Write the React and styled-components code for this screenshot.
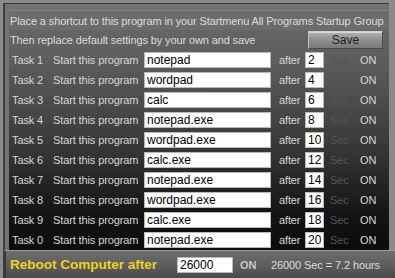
import React from 'react'
import styled, { createGlobalStyle } from 'styled-components'

const GlobalStyle = createGlobalStyle`
  html, body {
    margin: 0;
    padding: 0;
    background: #8a8a8a;
  }
  * {
    box-sizing: border-box;
  }
`

const Frame = styled.div`
  width: 395px;
  height: 278px;
  background: #8a8a8a;
  padding: 3px 6px 0 3px;
  font-family: "Liberation Sans", Arial, sans-serif;
  display: flex;
  flex-direction: column;
  overflow: hidden;
`

const Panel = styled.div`
  flex: 1;
  display: flex;
  flex-direction: column;
  border-top: 1px solid #3c3c3c;
  border-left: 2px solid #3c3c3c;
  background: #727272;
  padding-top: 6px;
`

const Body = styled.div`
  display: flex;
  flex-direction: column;
  margin-left: 4px;
  background: linear-gradient(#6a6a6a 0%, #5e5e5e 20%, #3a3a3a 55%, #141414 85%, #0c0c0c 100%);
`

const InfoRow = styled.div`
  height: 20px;
  display: flex;
  align-items: center;
  justify-content: space-between;
  padding: 0 6px 0 1px;
  font-size: 11px;
  letter-spacing: -0.12px;
  white-space: nowrap;
  color: #dcdcdc;
  background: ${p => (p.$first ? '#6c6c6c' : 'transparent')};
  border-top: ${p => (p.$first ? '1px solid #858585' : 'none')};
`

const SaveButton = styled.button`
  width: 75px;
  height: 18px;
  padding: 0;
  font-family: inherit;
  font-size: 12px;
  color: #1e1e1e;
  background: linear-gradient(#b4b4b4, #8c8c8c 55%, #7a7a7a);
  border: 1px solid #4a4a4a;
  border-top-color: #d0d0d0;
  border-left-color: #c0c0c0;
  box-shadow: inset 0 1px 0 #d8d8d8;
`

const TaskRow = styled.div`
  height: 20px;
  display: grid;
  grid-template-columns: 41px 91px 127px 34px 19px 36px auto;
  align-items: center;
  padding-left: 3px;
  font-size: 11px;
  letter-spacing: -0.12px;
  color: #d6d6d6;
`

const Label = styled.span`
  white-space: nowrap;
  color: ${p => p.$dim ? '#555555' : '#d6d6d6'};
  padding-left: ${p => p.$pad || 0}px;
`

const TextField = styled.input`
  height: 16px;
  width: ${p => p.$w}px;
  padding: 0 2px;
  font-family: "Liberation Sans", Arial, sans-serif;
  font-size: 12px;
  color: #000;
  background: #fff;
  border: 1px solid #b8b8b8;
  outline: none;
`

const RebootBar = styled.div`
  height: 28px;
  display: flex;
  align-items: center;
  margin-right: -6px;
  margin-left: -2px;
  padding-left: 4px;
  border-top: 1px solid #9a9a9a;
  border-left: 3px solid #3a3a3a;
  background: linear-gradient(#6e6e6e, #5a5a5a 60%, #4a4a4a);
`

const RebootLabel = styled.span`
  font-size: 13.5px;
  font-weight: bold;
  color: #ecd321;
  width: 167px;
  white-space: nowrap;
`

const OnText = styled.span`
  font-size: 11px;
  font-weight: bold;
  color: #c8c8c8;
  margin-left: 7px;
  width: 31px;
`

const ResultText = styled.span`
  font-size: 11px;
  letter-spacing: -0.1px;
  color: #dcdcdc;
`

const tasks = [
  ['1', 'notepad', '2'],
  ['2', 'wordpad', '4'],
  ['3', 'calc', '6'],
  ['4', 'notepad.exe', '8'],
  ['5', 'wordpad.exe', '10'],
  ['6', 'calc.exe', '12'],
  ['7', 'notepad.exe', '14'],
  ['8', 'wordpad.exe', '16'],
  ['9', 'calc.exe', '18'],
  ['0', 'notepad.exe', '20'],
]

const App = () => (
  <>
    <GlobalStyle />
    <Frame>
      <Panel>
        <Body>
          <InfoRow $first>
            Place a shortcut to this program in your Startmenu All Programs Startup Group
          </InfoRow>
          <InfoRow>
            <span>Then replace default settings by your own and save</span>
            <SaveButton>Save</SaveButton>
          </InfoRow>
          {tasks.map(([n, prog, sec]) => (
            <TaskRow key={n}>
              <Label>Task {n}</Label>
              <Label>Start this program</Label>
              <TextField $w={127} defaultValue={prog} />
              <Label $pad={8}>after</Label>
              <TextField $w={19} defaultValue={sec} />
              <Label $dim $pad={6}>Sec</Label>
              <Label>ON</Label>
            </TaskRow>
          ))}
        </Body>
        <RebootBar>
          <RebootLabel>Reboot Computer after</RebootLabel>
          <TextField $w={56} defaultValue="26000" />
          <OnText>ON</OnText>
          <ResultText>26000 Sec = 7.2 hours</ResultText>
        </RebootBar>
      </Panel>
    </Frame>
  </>
)

export default App
